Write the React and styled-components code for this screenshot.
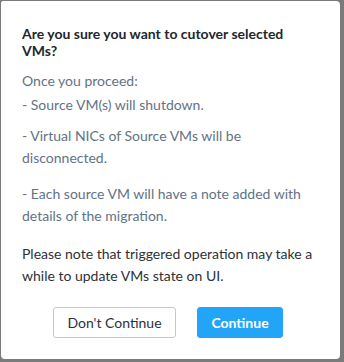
import React from 'react';
import styled, { createGlobalStyle } from 'styled-components';

const GlobalStyle = createGlobalStyle`
  html, body {
    margin: 0;
    padding: 0;
    background: #7b7b7b;
  }
  body {
    font-family: Lato, "Open Sans", Arial, sans-serif;
  }
`;

const Backdrop = styled.div`
  width: 344px;
  height: 362px;
  padding: 1px 4px 3px 1px;
  box-sizing: border-box;
`;

const Modal = styled.div`
  height: 100%;
  background: #ffffff;
  border-radius: 2px 4px 4px 4px;
  padding: 24px 20px 16px 21px;
  box-sizing: border-box;
  display: flex;
  flex-direction: column;
`;

const Title = styled.h3`
  margin: 0;
  font-size: 14px;
  line-height: 17px;
  font-weight: 700;
  color: #22272e;
`;

const Body = styled.div`
  margin-top: 11px;
`;

const Text = styled.p`
  margin: 0 0 ${(p) => p.$gap || 0}px;
  font-size: 14px;
  line-height: 22px;
  color: ${(p) => (p.$dark ? '#2c3139' : '#627386')};
`;

const Actions = styled.div`
  display: flex;
  justify-content: center;
  gap: 21px;
  margin-top: 20px;
  padding-right: 6px;
`;

const Button = styled.button`
  height: 31px;
  padding: 0;
  border-radius: 3px;
  font-family: inherit;
  font-size: 14px;
  font-weight: ${(p) => (p.$primary ? 700 : 400)};
  cursor: pointer;
  border: 1px solid ${(p) => (p.$primary ? '#22a5f7' : '#c4c9d0')};
  background: ${(p) => (p.$primary ? '#22a5f7' : '#ffffff')};
  color: ${(p) => (p.$primary ? '#ffffff' : '#2c3139')};
  width: ${(p) => (p.$primary ? 86 : 123)}px;
`;

export default function App() {
  return (
    <>
      <GlobalStyle />
      <Backdrop>
        <Modal>
          <Title>Are you sure you want to cutover selected VMs?</Title>
          <Body>
            <Text $gap={2}>Once you proceed:</Text>
            <Text $gap={9}>- Source VM(s) will shutdown.</Text>
            <Text $gap={14}>- Virtual NICs of Source VMs will be disconnected.</Text>
            <Text $gap={16}>- Each source VM will have a note added with details of the migration.</Text>
            <Text $dark>Please note that triggered operation may take a while to update VMs state on UI.</Text>
          </Body>
          <Actions>
            <Button>Don't Continue</Button>
            <Button $primary>Continue</Button>
          </Actions>
        </Modal>
      </Backdrop>
    </>
  );
}
